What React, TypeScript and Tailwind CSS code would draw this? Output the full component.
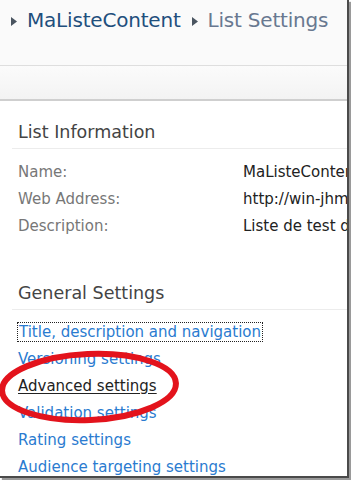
import React from "react";

const font = { fontFamily: '"DejaVu Sans", Verdana, sans-serif' };

export default function App() {
  const rows = [
    ["Name:", "MaListeContent"],
    ["Web Address:", "http://win-jhm/Lists/MaListeContent"],
    ["Description:", "Liste de test de contenu"],
  ];
  const links = [
    "Versioning settings",
    "Advanced settings",
    "Validation settings",
    "Rating settings",
    "Audience targeting settings",
  ];
  return (
    <div className="w-[351px] h-[480px] bg-white relative" style={font}>
      <div className="w-[349px] h-[478px] border-r-2 border-b-2 border-[#4a4a4a] shadow-[2px_2px_1px_#9a9a9a] overflow-hidden relative bg-white">
        {/* top band */}
        <div className="h-[66px] bg-[#fafafa] flex items-start pl-[11px] pt-[6px] border-b border-[#dedede]">
          <svg width="6" height="9" viewBox="0 0 6 9" className="mr-[10px] mt-[11px]">
            <path d="M0 0 L6 4.5 L0 9 Z" fill="#4a5560" />
          </svg>
          <span className="text-[20px] leading-[28px] text-[#1f4f7d] tracking-[-0.2px]">MaListeContent</span>
          <svg width="6" height="9" viewBox="0 0 6 9" className="ml-[11px] mr-[10px] mt-[11px]">
            <path d="M0 0 L6 4.5 L0 9 Z" fill="#4a5560" />
          </svg>
          <span className="text-[20px] leading-[28px] text-[#687890] tracking-[-0.2px]">List Settings</span>
        </div>
        <div className="h-[35px] bg-gradient-to-b from-[#fbfbfb] to-[#f3f3f3] border-b-2 border-[#cfcfcf]" />

        <div className="pl-[12px] pt-[20px]">
          <div className="border-b border-[#ececec] pl-[6px] pb-[5px] text-[17.5px] text-[#444] leading-[22px]">
            List Information
          </div>
          <div className="pl-[6px] pt-[10px] text-[15px] leading-[27px]">
            {rows.map(([l, v]) => (
              <div key={l} className="flex whitespace-nowrap">
                <span className="w-[225px] shrink-0 text-[#777]">{l}</span>
                <span className="text-[#222]">{v}</span>
              </div>
            ))}
          </div>

          <div className="mt-[42px] border-b border-[#ececec] pl-[6px] pb-[5px] text-[17.5px] text-[#444] leading-[22px]">
            General Settings
          </div>
          <div className="pl-[6px] pt-[9px] text-[15px] leading-[27px] text-[#2a7bd0]">
            <div>
              <span className="outline outline-1 outline-dotted outline-[#222] outline-offset-0 px-[1px]">
                Title, description and navigation
              </span>
            </div>
            {links.map((t) => (
              <div key={t}>
                {t === "Advanced settings" ? (
                  <span className="text-[#222] underline underline-offset-2">{t}</span>
                ) : (
                  <span>{t}</span>
                )}
              </div>
            ))}
          </div>
        </div>

        <svg className="absolute left-0 top-0 pointer-events-none" width="349" height="478">
          <ellipse cx="89" cy="387" rx="87" ry="33" fill="none" stroke="#e3131c" strokeWidth="6" transform="rotate(-2.5 89 387)" />
        </svg>
      </div>
    </div>
  );
}
